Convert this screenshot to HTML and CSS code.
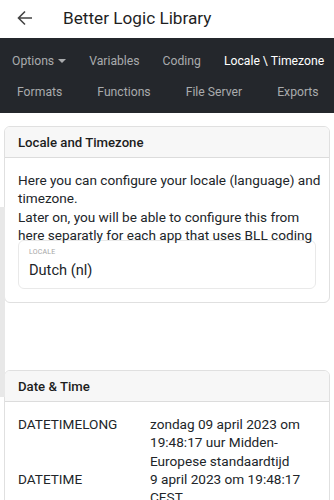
FILE: index.html
```html
<!DOCTYPE html>
<html lang="en">
  <head>
    <meta charset="utf-8" />
    <meta name="viewport" content="width=device-width, initial-scale=1" />
    <title>Better Logic Library</title>
    <link rel="stylesheet" href="styles.css">
  </head>
  <body>
    <!-- App bar -->
    <header class="appbar">
      <svg class="back" width="16" height="16" viewBox="0 0 16 16">
        <path d="M15 8H2M8 1.5L1.5 8 8 14.5" fill="none" stroke="#444" stroke-width="1.6" />
      </svg>
      <span class="appbar-title">Better Logic Library</span>
    </header>

    <!-- Main navigation -->
    <nav class="navbar">
      <div class="nav-row nav-row-1">
        <span class="nav-link">Options <span class="caret"></span></span>
        <span class="nav-link">Variables</span>
        <span class="nav-link">Coding</span>
        <span class="nav-link active">Locale \ Timezone</span>
      </div>
      <div class="nav-row nav-row-2">
        <span class="nav-link">Formats</span>
        <span class="nav-link">Functions</span>
        <span class="nav-link">File Server</span>
        <span class="nav-link">Exports</span>
      </div>
    </nav>

    <main class="content">
      <section class="card">
        <div class="card-header">Locale and Timezone</div>
        <div class="card-body">
          <p class="intro">Here you can configure your locale (language) and timezone.<br>Later on, you will be able to configure this from here separatly for each app that uses BLL coding</p>
          <div class="field">
            <div class="field-label">LOCALE</div>
            <div class="field-value">Dutch (nl)</div>
          </div>
        </div>
      </section>

      <section class="card card-dates">
        <div class="card-header">Date &amp; Time</div>
        <div class="card-body">
          <div class="dt-row">
            <div class="dt-key">DATETIMELONG</div>
            <div class="dt-val">zondag 09 april 2023 om 19:48:17 uur Midden-Europese standaardtijd</div>
          </div>
          <div class="dt-row">
            <div class="dt-key">DATETIME</div>
            <div class="dt-val">9 april 2023 om 19:48:17 CEST</div>
          </div>
        </div>
      </section>
    </main>

    <!-- overscroll edge glow -->
    <div class="edge-glow"></div>
  </body>
</html>
```

FILE: styles.css
```css
* {
  margin: 0;
  padding: 0;
  box-sizing: border-box;
}

body {
  font-family: Roboto, 'Liberation Sans', sans-serif;
  background-color: #fff;
  color: #212529;
  overflow: hidden;
}

/* App bar */
.appbar {
  height: 38px;
  display: flex;
  align-items: center;
  padding-left: 17px;
  background: #fff;
}

.back {
  margin-top: -2px;
}

.appbar-title {
  margin-left: 30px;
  font-size: 17.2px;
  color: #1f1f1f;
  margin-top: -2px;
}

/* Navigation */
.navbar {
  background: #24272c;
  height: 75px;
  padding-top: 7px;
  font-size: 12.2px;
}

.nav-row {
  display: flex;
  height: 31px;
  align-items: center;
}

.nav-row-1 {
  padding-left: 12px;
  gap: 23px;
}

.nav-row-2 {
  padding-left: 17px;
  gap: 35px;
}

.nav-link {
  color: #a9abad;
  white-space: nowrap;
}

.nav-link.active {
  color: #fff;
}

.caret {
  display: inline-block;
  width: 0;
  height: 0;
  margin-left: 1px;
  vertical-align: 2px;
  border-left: 4px solid transparent;
  border-right: 4px solid transparent;
  border-top: 4px solid #a9abad;
}

/* Cards */
.content {
  padding: 13px 4px 0;
}

.card {
  border: 1px solid #e0e0e0;
  border-radius: 6px;
  overflow: hidden;
}

.card-dates {
  margin-top: 67px;
}

.card-header {
  height: 31px;
  background: #f7f7f7;
  border-bottom: 1px solid #dcdcdc;
  padding-left: 13px;
  display: flex;
  align-items: center;
  font-size: 13.2px;
  font-weight: 500;
  color: #1d1d1d;
}

.card-body {
  padding: 13px 13px 13px;
  font-size: 13.6px;
  line-height: 18.3px;
}

.intro {
  margin-right: -8px;
}

.field {
  margin-top: -4px;
  height: 49px;
  border: 1px solid #e9e9e9;
  border-radius: 6px;
  padding: 6px 10px 0;
}

.field-label {
  font-size: 7px;
  line-height: 11px;
  color: #a5a5a5;
  letter-spacing: 0.2px;
}

.field-value {
  font-size: 14.6px;
  line-height: 20px;
  margin-top: 2px;
}

.dt-row {
  display: flex;
}

.dt-key {
  width: 132px;
  flex-shrink: 0;
}

.dt-val {
  flex: 1;
}

/* overscroll edge glow */
.edge-glow {
  position: absolute;
  left: 0;
  top: 207px;
  width: 5px;
  height: 190px;
  background: #e8e8e8;
}
```
